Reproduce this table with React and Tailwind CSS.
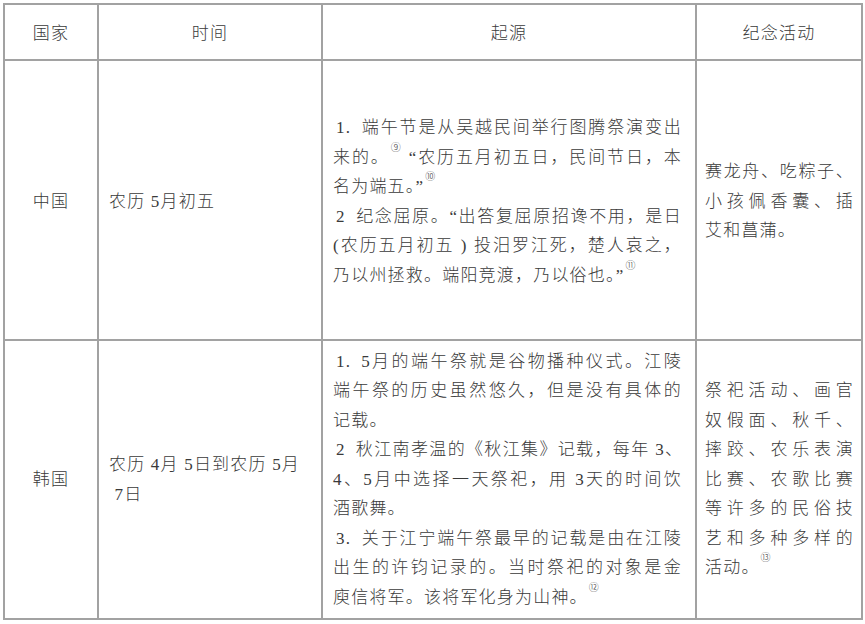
const ORIGIN_CN = [
    { n: "1.", t: "端午节是从吴越民间举行图腾祭演变出", j: true },
    { t: "来的。", sup: "⑨", rest: " “农历五月初五日，民间节日，本", j: true },
    { t: "名为端五。”", sup: "⑩" },
    { n: "2", t: "纪念屈原。“出答复屈原招谗不用，是日", j: true },
    { t: "(农历五月初五 ) 投汨罗江死，楚人哀之，", j: true },
    { t: "乃以州拯救。端阳竞渡，乃以俗也。”", sup: "⑪" },
];

const ORIGIN_KR = [
    { n: "1.", t: "5月的端午祭就是谷物播种仪式。江陵", j: true },
    { t: "端午祭的历史虽然悠久，但是没有具体的", j: true },
    { t: "记载。" },
    { n: "2", t: "秋江南孝温的《秋江集》记载，每年 3、", j: true, tight: true },
    { t: "4、5月中选择一天祭祀，用 3天的时间饮", j: true },
    { t: "酒歌舞。" },
    { n: "3.", t: "关于江宁端午祭最早的记载是由在江陵", j: true },
    { t: "出生的许钧记录的。当时祭祀的对象是金", j: true },
    { t: "庾信将军。该将军化身为山神。", sup: "⑫" },
];

const EVENTS_CN = [
    { t: "赛龙舟、吃粽子、", j: true },
    { t: "小孩佩香囊、插", j: true },
    { t: "艾和菖蒲。" },
];

const EVENTS_KR = [
    { t: "祭祀活动、画官", j: true },
    { t: "奴假面、秋千、", j: true },
    { t: "摔跤、农乐表演", j: true },
    { t: "比赛、农歌比赛", j: true },
    { t: "等许多的民俗技", j: true },
    { t: "艺和多种多样的", j: true },
    { t: "活动。", sup: "⑬" },
];

function Lines({ lines }) {
    return (
        <div className="leading-[29.5px]">
            {lines.map((l, i) => (
                <div
                    key={i}
                    className={`${l.j ? "text-justify [text-align-last:justify]" : "text-left"} ${l.tight ? "whitespace-nowrap tracking-normal" : ""}`}
                >
                    {l.n ? <span className="mr-[10px] pl-[3px]">{l.n}</span> : null}
                    {l.t}
                    {l.sup ? <sup className="ml-[1px] text-[10px] align-[7px]">{l.sup}</sup> : null}
                    {l.rest}
                </div>
            ))}
        </div>
    );
}

const cell = "border-2 border-[#a2a2a2] align-middle";

export default function App() {
    return (
        <div
            lang="zh-CN"
            className="min-h-[624px] bg-white pl-[3px] pt-[3px] font-['Liberation_Serif','Noto_Sans_CJK_SC',serif] text-[17px] font-light tracking-[1.2px] text-[#3a3a3a]"
        >
            <table className="w-[858px] table-fixed border-collapse">
                <colgroup>
                    <col className="w-[94px]" />
                    <col className="w-[224px]" />
                    <col className="w-[374px]" />
                    <col className="w-[166px]" />
                </colgroup>
                <thead>
                    <tr className="h-[56px]">
                        <th className={`${cell} pt-[3px] text-center font-light`}>国家</th>
                        <th className={`${cell} pt-[3px] text-center font-light`}>时间</th>
                        <th className={`${cell} pt-[3px] text-center font-light`}>起源</th>
                        <th className={`${cell} pt-[3px] text-center font-light`}>纪念活动</th>
                    </tr>
                </thead>
                <tbody>
                    <tr className="h-[280px]">
                        <td className={`${cell} pt-[3px] text-center`}>中国</td>
                        <td className={`${cell} pl-[10px] pr-2 pt-[3px]`}>农历 5月初五</td>
                        <td className={`${cell} pl-[10px] pr-[13px] pt-[3px]`}>
                            <Lines lines={ORIGIN_CN} />
                        </td>
                        <td className={`${cell} pl-[8px] pr-[7px] pt-[3px]`}>
                            <Lines lines={EVENTS_CN} />
                        </td>
                    </tr>
                    <tr className="h-[279px]">
                        <td className={`${cell} text-center`}>韩国</td>
                        <td className={`${cell} pl-[10px] pr-2 leading-[29.5px]`}>
                            农历 4月 5日到农历 5月
                            <br />
                            &nbsp;7日
                        </td>
                        <td className={`${cell} pl-[10px] pr-[13px]`}>
                            <Lines lines={ORIGIN_KR} />
                        </td>
                        <td className={`${cell} pl-[8px] pr-[7px]`}>
                            <Lines lines={EVENTS_KR} />
                        </td>
                    </tr>
                </tbody>
            </table>
        </div>
    );
}
